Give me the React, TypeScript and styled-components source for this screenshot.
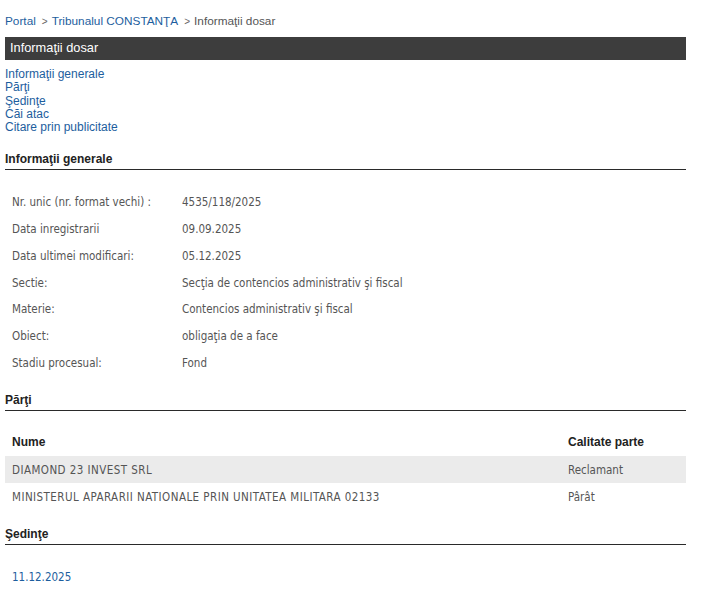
import React from "react";
import styled, { createGlobalStyle } from "styled-components";

const Global = createGlobalStyle`
  html, body { margin: 0; padding: 0; background: #fff; }
  body { font-family: "Liberation Sans", Arial, sans-serif; font-size: 12px; }
`;

const Page = styled.div`
  width: 681px;
  margin-left: 5px;
  padding-top: 14px;
`;

const Crumbs = styled.div`
  font-size: 11.8px;
  line-height: 14px;
  color: #555;
  display: flex;
  align-items: baseline;
`;

const Link = styled.a`
  color: #1d5e9e;
  text-decoration: none;
  cursor: pointer;
`;

const Sep = styled.span`
  color: #666;
  font-size: 10px;
  margin: 0 4px 0 6px;
`;

const TitleBar = styled.div`
  margin-top: 8px;
  height: 23px;
  line-height: 21px;
  background: #3d3d3d;
  color: #fff;
  font-size: 12.8px;
  padding-left: 5px;
`;

const Nav = styled.nav`
  margin-top: 8px;
  display: flex;
  flex-direction: column;
  font-size: 12px;
  line-height: 13.3px;
`;

const SectionTitle = styled.h2<{ $mt: number }>`
  margin: ${(p) => p.$mt}px 0 0 0;
  font-size: 12px;
  font-weight: bold;
  line-height: 14px;
  color: #222;
  padding-bottom: 3px;
  border-bottom: 1px solid #2a2a2a;
`;

const DataTable = styled.div<{ $mt: number }>`
  margin-top: ${(p) => p.$mt}px;
  display: flex;
  flex-direction: column;
`;

const InfoRow = styled.div`
  display: grid;
  grid-template-columns: 170px 1fr;
  height: 26.8px;
  align-items: center;
  font-family: "DejaVu Sans Condensed", "DejaVu Sans", Tahoma, sans-serif;
  font-size: 11.5px;
  color: #555;
  padding-left: 7px;
`;

const PartyRow = styled.div<{ $shade?: boolean; $head?: boolean }>`
  display: grid;
  grid-template-columns: 556px 1fr;
  height: ${(p) => (p.$head ? 28 : 27.5)}px;
  align-items: center;
  padding-left: 7px;
  background: ${(p) => (p.$shade ? "#ebebeb" : "transparent")};
  color: ${(p) => (p.$head ? "#222" : "#555")};
  font-family: ${(p) =>
    p.$head
      ? '"Liberation Sans", Arial, sans-serif'
      : '"DejaVu Sans Condensed", "DejaVu Sans", Tahoma, sans-serif'};
  font-weight: ${(p) => (p.$head ? "bold" : "normal")};
  font-size: ${(p) => (p.$head ? "12px" : "11.5px")};
`;

const NameCell = styled.span<{ $head?: boolean }>`
  letter-spacing: ${(p) => (p.$head ? "0" : "0.45px")};
`;

const DateLink = styled(Link)`
  display: block;
  margin-top: 19px;
  padding-left: 7px;
  line-height: 27px;
  font-family: "DejaVu Sans Condensed", "DejaVu Sans", Tahoma, sans-serif;
  font-size: 11.5px;
`;

const info: [string, string][] = [
  ["Nr. unic (nr. format vechi) :", "4535/118/2025"],
  ["Data inregistrarii", "09.09.2025"],
  ["Data ultimei modificari:", "05.12.2025"],
  ["Sectie:", "Secţia de contencios administrativ şi fiscal"],
  ["Materie:", "Contencios administrativ şi fiscal"],
  ["Obiect:", "obligaţia de a face"],
  ["Stadiu procesual:", "Fond"],
];

const parties: [string, string][] = [
  ["DIAMOND 23 INVEST SRL", "Reclamant"],
  ["MINISTERUL APARARII NATIONALE PRIN UNITATEA MILITARA 02133", "Pârât"],
];

export default function App() {
  return (
    <>
      <Global />
      <Page>
        <Crumbs>
          <Link>Portal</Link>
          <Sep>&gt;</Sep>
          <Link>Tribunalul CONSTANŢA</Link>
          <Sep>&gt;</Sep>
          <span>Informaţii dosar</span>
        </Crumbs>
        <TitleBar>Informaţii dosar</TitleBar>
        <Nav>
          <Link>Informaţii generale</Link>
          <Link>Părţi</Link>
          <Link>Şedinţe</Link>
          <Link>Căi atac</Link>
          <Link>Citare prin publicitate</Link>
        </Nav>
        <SectionTitle $mt={18}>Informaţii generale</SectionTitle>
        <DataTable $mt={18.4}>
          {info.map(([k, v]) => (
            <InfoRow key={k}>
              <span>{k}</span>
              <span>{v}</span>
            </InfoRow>
          ))}
        </DataTable>
        <SectionTitle $mt={16.4}>Părţi</SectionTitle>
        <DataTable $mt={17}>
          <PartyRow $head>
            <NameCell $head>Nume</NameCell>
            <span>Calitate parte</span>
          </PartyRow>
          {parties.map(([n, c], i) => (
            <PartyRow key={n} $shade={i % 2 === 0}>
              <NameCell>{n}</NameCell>
              <span>{c}</span>
            </PartyRow>
          ))}
        </DataTable>
        <SectionTitle $mt={16}>Şedinţe</SectionTitle>
        <DateLink>11.12.2025</DateLink>
      </Page>
    </>
  );
}
